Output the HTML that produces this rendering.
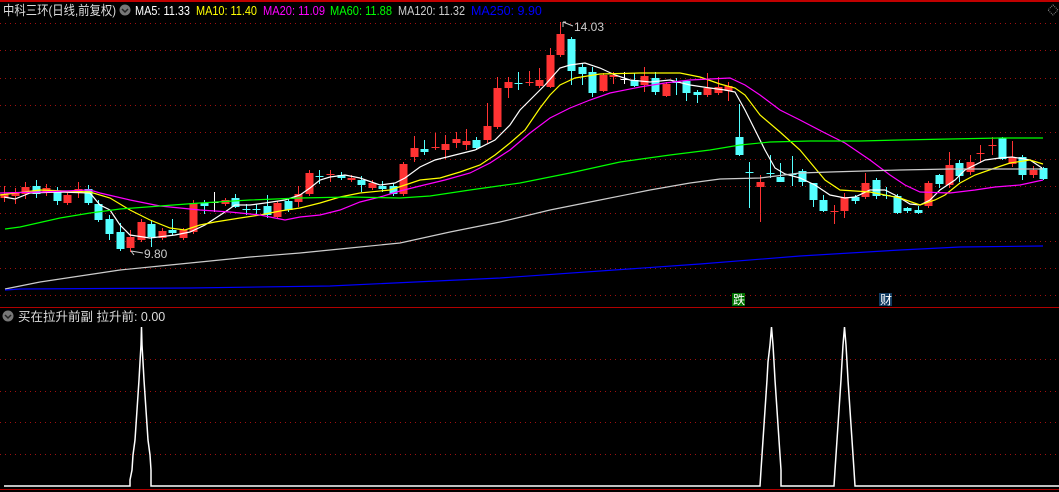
<!DOCTYPE html>
<html><head><meta charset="utf-8"><style>
html,body{margin:0;padding:0;background:#000;width:1059px;height:492px;overflow:hidden}
svg{display:block}
text{font-family:"Liberation Sans","Noto Sans CJK SC",sans-serif}
</style></head><body>
<svg id="s" width="1059" height="492" xmlns="http://www.w3.org/2000/svg">
<rect width="1059" height="492" fill="#000"/>
<rect x="0" y="0" width="1059" height="2" fill="#c00000"/>
<g id="grid" stroke="#a01010" stroke-width="1" stroke-dasharray="1,4"></g>
<line x1="0" y1="307.5" x2="1059" y2="307.5" stroke="#b00000"/>
<line x1="0" y1="489.5" x2="1059" y2="489.5" stroke="#b00000"/>
<g id="c"></g>
<g id="ma" fill="none" stroke-width="1.2"></g>
<circle cx="125" cy="10" r="5.5" fill="#777"/><path d="M122 9 L125 12 L128 9" stroke="#222" fill="none" stroke-width="1.5"/>
<text x="3" y="15" font-size="13" fill="#ddd" textLength="113" lengthAdjust="spacingAndGlyphs">中科三环(日线,前复权)</text>
<text x="135" y="15" font-size="12.5" fill="#fff" textLength="55" lengthAdjust="spacingAndGlyphs">MA5: 11.33</text>
<text x="196" y="15" font-size="12.5" fill="#ff0" textLength="61" lengthAdjust="spacingAndGlyphs">MA10: 11.40</text>
<text x="263" y="15" font-size="12.5" fill="#f0f" textLength="62" lengthAdjust="spacingAndGlyphs">MA20: 11.09</text>
<text x="330" y="15" font-size="12.5" fill="#0f0" textLength="62" lengthAdjust="spacingAndGlyphs">MA60: 11.88</text>
<text x="398" y="15" font-size="12.5" fill="#ccc" textLength="67" lengthAdjust="spacingAndGlyphs">MA120: 11.32</text>
<text x="471" y="15" font-size="12.5" fill="#00f">MA250: 9.90</text>
<path d="M1053 5 L1058 10 L1053 15 L1048 10 Z" stroke="#888" fill="none" stroke-dasharray="1,1"/>
<path d="M563 22 L563 27 M563 22 L566 22 M563 22 L573 26" stroke="#ccc" fill="none"/>
<text x="574" y="31" font-size="12" fill="#ccc">14.03</text>
<path d="M131 251 L134 255 M131 251 L143 253" stroke="#ccc" fill="none"/>
<text x="144" y="258" font-size="12" fill="#ccc">9.80</text>
<rect x="732" y="293" width="13" height="13" fill="#007000"/>
<text x="733" y="304" font-size="12" fill="#fff">跌</text>
<rect x="879" y="293" width="13" height="13" fill="#103a60"/>
<text x="880" y="304" font-size="12" fill="#fff">财</text>
<circle cx="8" cy="316" r="5.5" fill="#777"/><path d="M5 315 L8 318 L11 315" stroke="#222" fill="none" stroke-width="1.5"/>
<text x="18" y="321" font-size="12.5" fill="#ddd">买在拉升前副  拉升前: 0.00</text>
<polyline fill="none" stroke="#fff" stroke-width="1.5" points="4,486 130,486 130,480 132,470 133,455 135,440 136,425 137,410 138,395 139,380 140,362 141,345 141.5,327 142,345 143,362 144,380 145,395 146,410 147,425 148,440 150,455 151,470 151,486 760,486 761,470 762,455 763,440 764,425 765,410 766,395 767,380 768,362 770,345 771.5,327 773,345 774,362 775,380 776,395 777,410 778,425 779,440 780,455 781,470 781,486 834,486 835,470 836,455 837,440 838,425 839,410 840,395 841,380 842,362 843,345 844.5,327 846,345 847,362 848,380 849,395 850,410 851,425 852,440 853,455 854,470 855,486 1059,486"/>
</svg>
<script>
var NS="http://www.w3.org/2000/svg";
function el(p,t,a){var e=document.createElementNS(NS,t);for(var k in a)e.setAttribute(k,a[k]);p.appendChild(e);return e;}
var g=document.getElementById('grid');
[23,50,78,105,132,159,186,213,241,268,295,359,391,422,454].forEach(function(y){el(g,'line',{x1:0,y1:y+.5,x2:1059,y2:y+.5});});
var C=[[4,'r',194,198,186,202],[15,'r',192,196,188,204],[25,'r',187,194,182,199],[36,'c',186,194,180,198],[46,'r',188,193,184,196],[57,'c',191,201,187,205],[67,'r',195,203,193,205],[78,'r',189,193,182,198],[88,'c',189,203,185,205],[98,'c',204,220,200,222],[109,'c',219,234,215,240],[120,'c',232,249,223,251],[130,'r',237,248,230,252],[141,'r',222,240,219,242],[151,'c',224,237,220,247],[162,'r',231,238,228,240],[172,'c',230,233,219,235],[183,'r',230,238,228,240],[193,'r',203,232,200,234],[204,'c',203,206,200,214],[214,'w',202,203,192,212],[225,'r',200,204,198,206],[235,'c',198,207,194,208],[246,'c',209,210,204,215],[256,'c',209,210,204,215],[267,'c',206,215,195,218],[277,'r',203,217,201,218],[288,'c',201,210,199,212],[298,'r',194,202,186,207],[309,'r',173,194,170,196],[319,'c',176,177,170,184],[330,'r',174,175,170,182],[341,'c',175,178,172,180],[351,'r',178,180,175,182],[361,'c',180,185,176,192],[372,'r',183,188,180,190],[382,'c',186,189,181,192],[393,'c',186,194,183,196],[403,'r',164,194,162,196],[414,'r',148,157,136,162],[424,'c',149,152,140,155],[435,'r',147,148,133,150],[445,'r',144,150,135,159],[456,'r',139,143,132,148],[466,'r',141,145,129,150],[476,'c',140,148,137,150],[487,'r',126,140,103,143],[497,'r',88,127,77,129],[508,'r',82,88,77,98],[518,'c',83,84,72,90],[529,'r',82,83,71,86],[539,'r',80,86,68,88],[550,'r',55,87,48,88],[560,'r',34,55,22,57],[571,'c',39,71,37,85],[582,'c',67,74,63,85],[592,'c',72,93,67,97],[603,'r',75,91,73,92],[613,'r',75,77,72,84],[624,'w',79,80,72,84],[634,'c',80,86,73,87],[644,'r',76,85,67,92],[655,'c',78,92,72,95],[666,'r',84,96,82,97],[676,'c',81,83,78,95],[686,'c',81,93,80,101],[697,'c',92,95,90,103],[707,'r',88,95,73,97],[718,'r',87,93,77,95],[728,'r',86,91,82,101],[739,'c',137,155,104,156],[749,'c',172,173,162,208],[760,'r',182,187,175,222],[770,'c',173,174,155,178],[780,'c',177,182,163,182],[792,'c',174,175,156,186],[802,'c',171,182,169,186],[813,'c',183,200,183,207],[823,'c',200,211,195,212],[834,'r',211,212,205,224],[844,'r',197,211,193,218],[855,'c',197,201,195,204],[865,'r',183,197,173,199],[876,'c',180,196,178,199],[886,'c',195,196,187,199],[897,'c',196,213,194,214],[907,'c',208,211,207,213],[918,'c',210,213,206,214],[928,'r',183,206,181,208],[939,'c',175,184,174,188],[949,'r',165,185,152,188],[959,'c',163,176,160,182],[970,'r',162,172,155,175],[980,'r',153,154,145,163],[992,'r',145,146,137,155],[1002,'c',138,159,137,160],[1012,'r',157,164,141,167],[1022,'c',157,175,155,180],[1033,'r',170,175,166,178],[1043,'c',168,179,167,180]];
var cg=document.getElementById('c');
var col={r:'#ff3333',c:'#54ffff',w:'#ffffff'};
C.forEach(function(d){var f=col[d[1]];
el(cg,'line',{x1:d[0]+.5,y1:d[4],x2:d[0]+.5,y2:d[5],stroke:f});
var h=Math.max(1,d[3]-d[2]);
el(cg,'rect',{x:d[0]-3.5,y:d[2],width:8,height:h,fill:f});});
var M=[
['#fff',"4,197 15,199 30,193 60,192 90,193 100,205 110,210 120,225 130,235 150,238 175,235 190,232 205,225 225,212 235,205 250,205 265,203 285,200 300,195 310,188 320,180 330,177 345,175 360,178 380,185 395,183 405,178 420,167 435,160 455,155 475,150 495,140 510,125 520,110 530,100 545,85 560,68 570,65 585,63 600,68 615,75 630,80 650,82 670,80 690,85 710,88 725,90 735,92 745,110 755,130 765,150 775,168 785,174 800,178 815,185 830,195 845,198 855,197 870,190 885,190 895,195 910,204 920,205 930,200 940,190 955,180 965,170 985,160 1000,158 1012,157 1030,160 1042,168"],
['#ff0',"0,195 40,190 90,192 110,198 130,210 150,220 170,228 185,230 200,225 215,222 240,218 260,215 280,211 300,208 320,203 340,197 360,193 390,190 405,185 420,180 440,178 460,172 480,165 495,155 510,143 525,130 540,108 550,95 560,85 575,78 600,74 640,73 680,73 700,77 720,84 735,88 745,95 760,115 780,132 800,150 825,180 840,190 870,192 900,198 920,205 935,200 945,195 960,183 975,175 995,168 1010,163 1030,160 1043,164"],
['#f0f',"0,193 40,192 90,190 100,193 130,200 160,206 180,208 200,210 230,212 260,215 275,218 285,220 300,217 320,215 340,210 360,202 380,197 400,191 420,186 445,180 470,173 490,163 510,150 530,133 550,118 570,108 590,100 610,93 640,87 665,83 690,80 730,78 745,85 760,95 780,110 800,120 825,133 845,143 870,160 890,175 905,185 920,192 950,193 975,190 995,187 1020,185 1043,180"],
['#0f0',"5,229 20,227 60,218 90,213 120,209 160,206 200,203 250,200 300,198 350,197 400,198 430,196 470,190 520,183 570,173 620,162 670,155 710,150 740,145 770,142 810,141 860,141 900,140 950,139 1000,138 1043,138"],
['#ccc',"5,289 40,282 80,276 120,270 160,266 200,262 250,257 300,253 350,248 400,243 450,232 500,222 550,210 600,200 650,190 690,183 720,179 760,178 800,173 830,172 900,170 950,169 1043,169"],
['#00f',"5,290 20,289 190,288 330,286 500,278 700,264 800,256 900,250 960,247 1043,246"]];
var mg=document.getElementById('ma');
M.forEach(function(m){el(mg,'polyline',{points:m[1],stroke:m[0]});});
</script>
</body></html>
